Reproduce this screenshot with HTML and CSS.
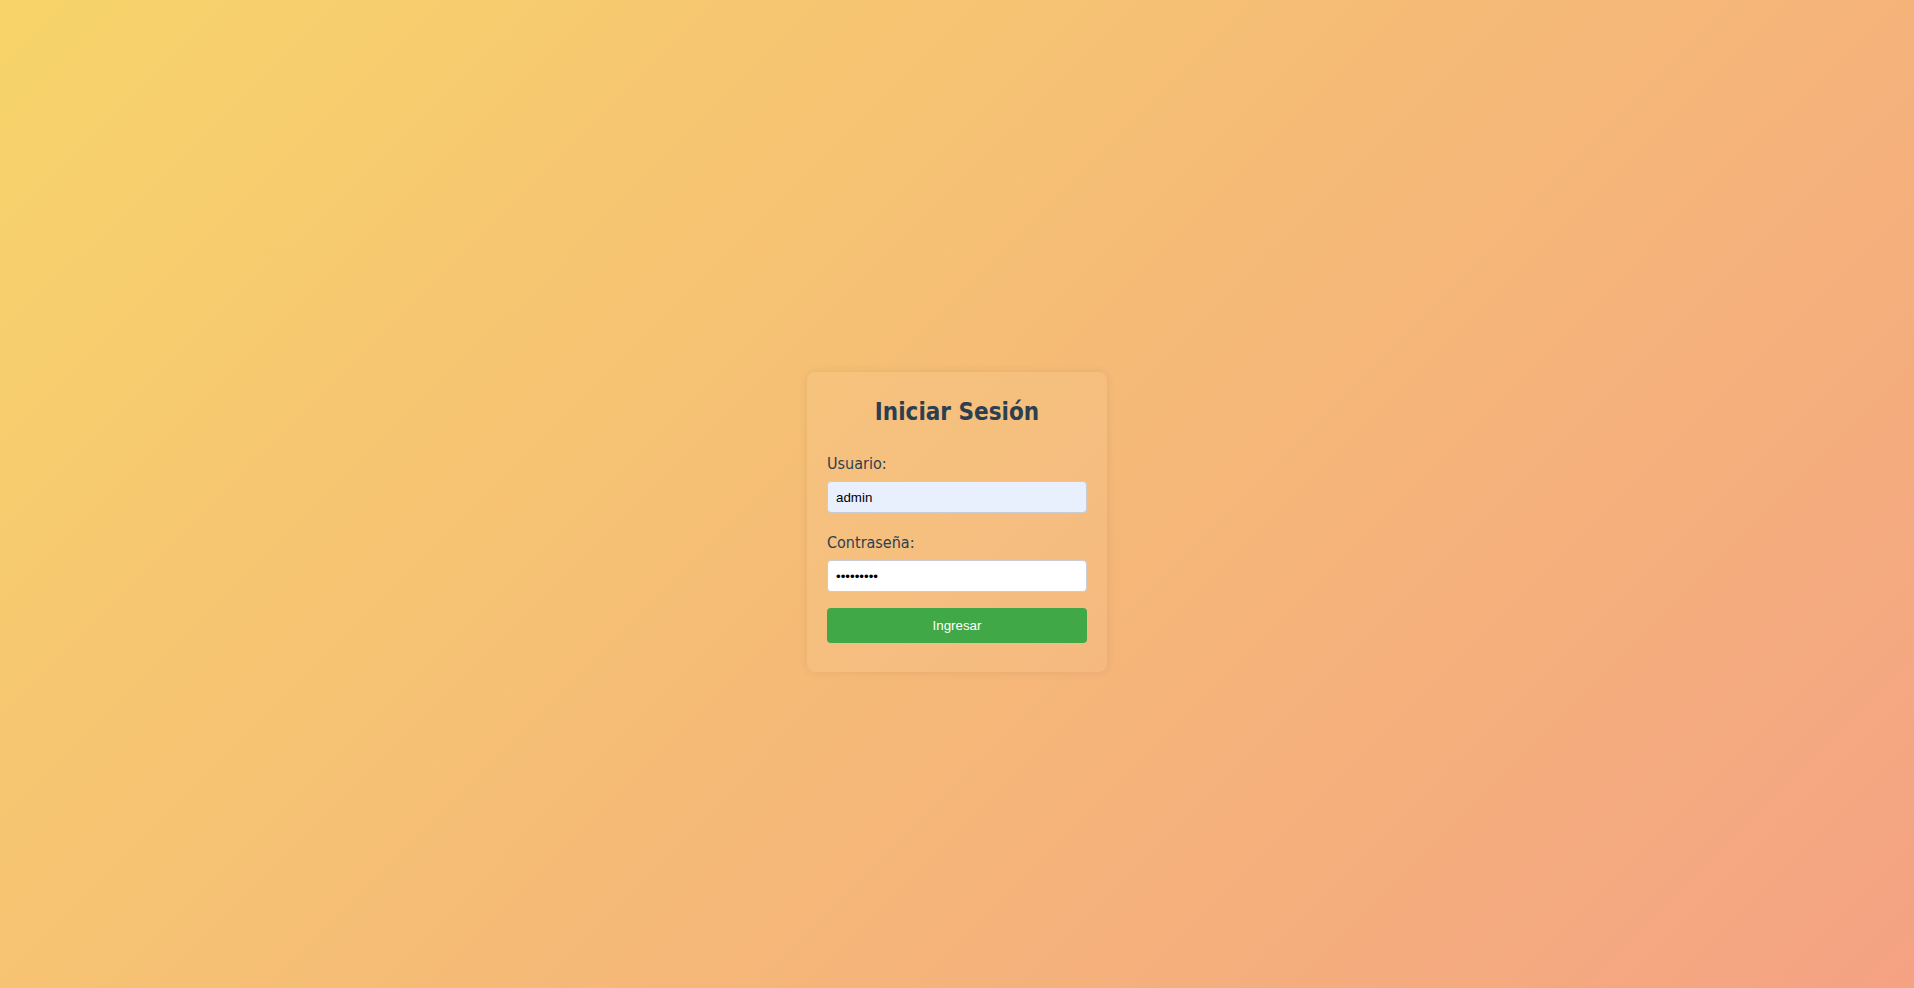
FILE: index.html
```html
<!DOCTYPE html>
<html lang="es">
<head>
<meta charset="utf-8">
<title>Iniciar Sesión</title>
<link rel="stylesheet" href="styles.css">
</head>
<body>
<main class="page">
  <form class="card" onsubmit="return false;">
    <h2 class="title">Iniciar Sesión</h2>
    <div class="group">
      <label class="label" for="user">Usuario:</label>
      <input class="field field-filled" id="user" type="text" value="admin">
    </div>
    <div class="group">
      <label class="label" for="pass">Contraseña:</label>
      <input class="field" id="pass" type="password" value="admin1234">
    </div>
    <button class="btn" type="submit">Ingresar</button>
  </form>
</main>
</body>
</html>
```
FILE: styles.css
```css
html, body {
  margin: 0;
  padding: 0;
  height: 100%;
}
body {
  background: linear-gradient(135deg, #f7d46a 0%, #f4a283 100%);
  font-family: "DejaVu Sans Condensed", "DejaVu Sans", sans-serif;
  font-stretch: condensed;
  color: #2c3e50;
}
.page {
  box-sizing: border-box;
  height: 100%;
  padding-top: 56px;
  display: flex;
  align-items: center;
  justify-content: center;
}
.card {
  box-sizing: border-box;
  width: 300px;
  height: 300px;
  padding: 26px 20px 29px;
  background: rgba(255, 255, 255, 0.06);
  border-radius: 8px;
  box-shadow: 0 0 10px rgba(0, 0, 0, 0.08);
  display: flex;
  flex-direction: column;
}
.title {
  margin: 0 0 28px;
  font-size: 24px;
  line-height: 28px;
  font-weight: bold;
  text-align: center;
  color: #2c3e50;
}
.group {
  display: flex;
  flex-direction: column;
  margin-bottom: 20px;
}
.group + .group {
  margin-bottom: 16px;
}
.label {
  font-size: 16px;
  line-height: 19px;
  margin-bottom: 8px;
  color: #2c3e50;
}
.field {
  box-sizing: border-box;
  width: 260px;
  height: 32px;
  padding: 0 8px;
  border: 1px solid #c9ccd3;
  border-radius: 4px;
  background: #ffffff;
  font-family: "Liberation Sans", Arial, sans-serif;
  font-size: 13.33px;
  color: #000;
  outline: none;
}
.field-filled {
  background: #e8f0fe;
}
.btn {
  box-sizing: border-box;
  width: 260px;
  height: 35px;
  flex: none;
  border: none;
  border-radius: 4px;
  background: #40a847;
  color: #ffffff;
  font-family: "Liberation Sans", Arial, sans-serif;
  font-size: 13.33px;
  cursor: pointer;
}
```
